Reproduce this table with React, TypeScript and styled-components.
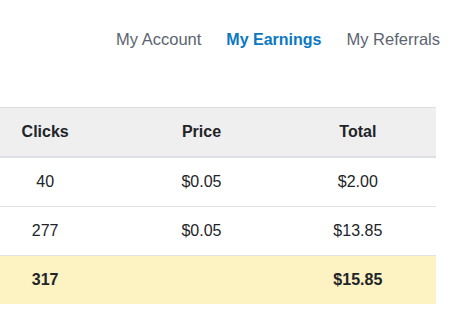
import React from "react";
import styled, { createGlobalStyle } from "styled-components";

const GlobalStyle = createGlobalStyle`
  body {
    margin: 0;
    background: #ffffff;
    font-family: "Liberation Sans", Arial, sans-serif;
    color: #222428;
  }
`;

interface Row {
  clicks: string;
  price: string;
  total: string;
}

const rows: Row[] = [
  { clicks: "40", price: "$0.05", total: "$2.00" },
  { clicks: "277", price: "$0.05", total: "$13.85" },
];

const tabs = ["My Account", "My Earnings", "My Referrals"];

const App: React.FC = () => {
  return (
    <Page>
      <GlobalStyle />
      <Nav>
        {tabs.map((t) => (
          <NavLink key={t} $active={t === "My Earnings"}>
            {t}
          </NavLink>
        ))}
      </Nav>
      <TableWrap>
        <Table>
          <thead>
            <tr>
              <Th>Clicks</Th>
              <Th>Price</Th>
              <Th>Total</Th>
            </tr>
          </thead>
          <tbody>
            {rows.map((r, i) => (
              <tr key={i}>
                <Td>{r.clicks}</Td>
                <Td>{r.price}</Td>
                <Td>{r.total}</Td>
              </tr>
            ))}
            <TotalRow>
              <Td $bold>317</Td>
              <Td />
              <Td $bold>$15.85</Td>
            </TotalRow>
          </tbody>
        </Table>
      </TableWrap>
    </Page>
  );
};

export default App;

const Page = styled.div`
  width: 451px;
  height: 323px;
  overflow: hidden;
`;

const Nav = styled.nav`
  display: flex;
  justify-content: flex-end;
  align-items: baseline;
  gap: 25px;
  padding: 30px 11px 0 0;
  height: 107px;
  box-sizing: border-box;
`;

const NavLink = styled.a<{ $active?: boolean }>`
  font-size: ${(p) => (p.$active ? "16px" : "16.5px")};
  line-height: 18px;
  cursor: pointer;
  color: ${(p) => (p.$active ? "#0a78c2" : "#5b6470")};
  font-weight: ${(p) => (p.$active ? "bold" : "normal")};
`;

const TableWrap = styled.div`
  margin-left: -33px;
  width: 469px;
`;

const Table = styled.table`
  width: 100%;
  border-collapse: collapse;
  table-layout: fixed;
`;

const Th = styled.th`
  background: #efefef;
  border-top: 1px solid #dcdde2;
  border-bottom: 2px solid #dcdfe4;
  height: 48px;
  padding: 0;
  font-size: 16px;
  font-weight: bold;
  color: #222428;
  text-align: center;
`;

const Td = styled.td<{ $bold?: boolean }>`
  border-bottom: 1px solid #e0e0e5;
  height: 48px;
  padding: 0;
  font-size: 16px;
  text-align: center;
  font-weight: ${(p) => (p.$bold ? "bold" : "normal")};
`;

const TotalRow = styled.tr`
  background: #fcf2c2;

  td {
    border-bottom: none;
  }
`;
